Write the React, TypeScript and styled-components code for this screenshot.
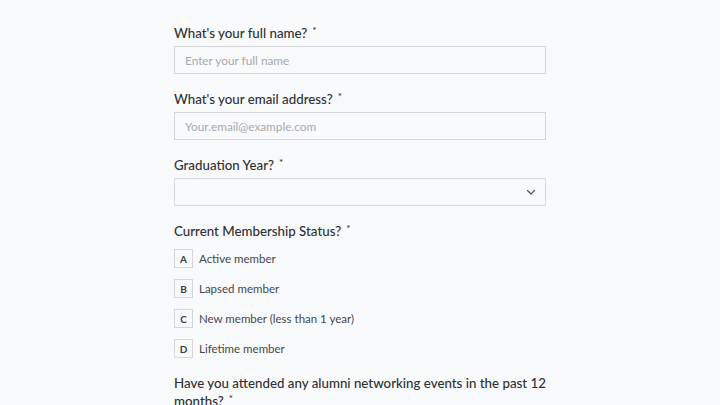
import styled, { createGlobalStyle } from 'styled-components'

const GlobalStyle = createGlobalStyle`
  html, body {
    margin: 0;
    padding: 0;
    background: #f9fafb;
  }
  body {
    font-family: 'Lato', 'Open Sans', sans-serif;
    color: #2f3033;
  }
`;

const Page = styled.div`
  width: 720px;
  height: 405px;
  overflow: hidden;
  display: flex;
  justify-content: center;
`;

const Form = styled.form`
  width: 372px;
  padding-top: 24px;
  display: flex;
  flex-direction: column;
  gap: 16px;
`;

const Field = styled.div<{ $gap?: number }>`
  display: flex;
  flex-direction: column;
  gap: ${(p) => p.$gap ?? 4}px;
`;

const Label = styled.label`
  font-size: 13.3px;
  line-height: 18px;
  font-weight: 500;
  color: #2f3033;
`;

const Required = styled.sup`
  font-size: 10px;
  margin-left: 5px;
  vertical-align: 4px;
  line-height: 0;
`;

const Input = styled.input`
  box-sizing: border-box;
  width: 100%;
  height: 28px;
  border: 1px solid #d4d6da;
  background: #f9fafb;
  padding: 0 10px;
  font-family: inherit;
  font-size: 11.8px;
  color: #2f3033;
  outline: none;
  &::placeholder {
    color: #a7a9ad;
  }
`;

const Select = styled.div`
  box-sizing: border-box;
  height: 28px;
  border: 1px solid #d4d6da;
  display: flex;
  align-items: center;
  justify-content: flex-end;
  padding: 0 8px;
  color: #505257;
`;

const Options = styled.div`
  display: flex;
  flex-direction: column;
  gap: 11px;
`;

const Option = styled.div`
  display: flex;
  align-items: center;
  gap: 6px;
  font-size: 11.5px;
  color: #45474b;
`;

const Key = styled.span`
  box-sizing: border-box;
  width: 19px;
  height: 19px;
  border: 1px solid #d4d6da;
  display: flex;
  align-items: center;
  justify-content: center;
  font-size: 10px;
  font-weight: 700;
  color: #3a3c40;
`;

const Chevron = () => (
  <svg width="12" height="12" viewBox="0 0 24 24" fill="none" stroke="currentColor" strokeWidth="2.4" strokeLinecap="round" strokeLinejoin="round">
    <path d="M5 9l7 7 7-7" />
  </svg>
)

const options = [
  { key: 'A', text: 'Active member' },
  { key: 'B', text: 'Lapsed member' },
  { key: 'C', text: 'New member (less than 1 year)' },
  { key: 'D', text: 'Lifetime member' },
]

const App = () => {
  return (
    <Page>
      <GlobalStyle />
      <Form>
        <Field>
          <Label>What's your full name?<Required>*</Required></Label>
          <Input placeholder="Enter your full name" />
        </Field>
        <Field>
          <Label>What's your email address?<Required>*</Required></Label>
          <Input placeholder="Your.email@example.com" />
        </Field>
        <Field>
          <Label>Graduation Year?<Required>*</Required></Label>
          <Select><Chevron /></Select>
        </Field>
        <Field $gap={9}>
          <Label>Current Membership Status?<Required>*</Required></Label>
          <Options>
            {options.map((o) => (
              <Option key={o.key}>
                <Key>{o.key}</Key>
                {o.text}
              </Option>
            ))}
          </Options>
        </Field>
        <Field>
          <Label>Have you attended any alumni networking events in the past 12 months?<Required>*</Required></Label>
        </Field>
      </Form>
    </Page>
  );
};

export default App;
